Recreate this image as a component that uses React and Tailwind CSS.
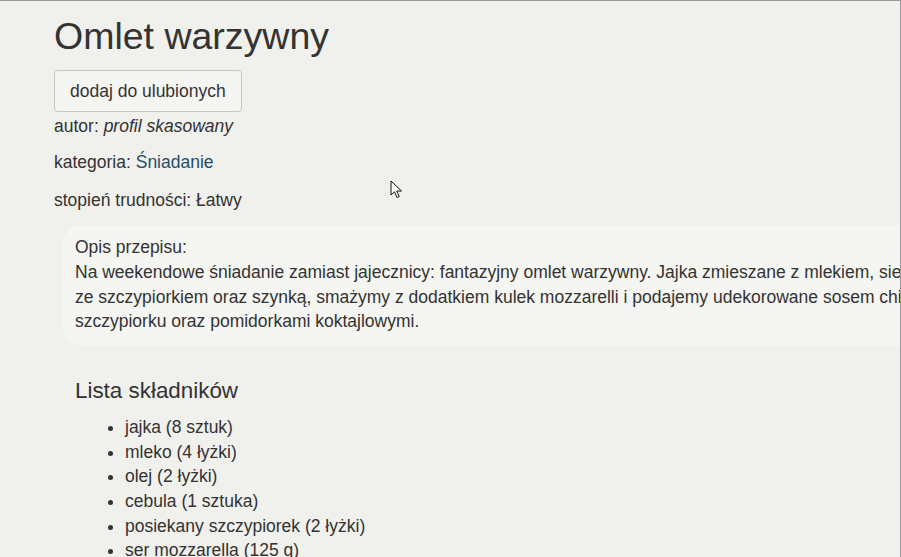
import React from 'react'

const ingredients = [
    'jajka (8 sztuk)',
    'mleko (4 łyżki)',
    'olej (2 łyżki)',
    'cebula (1 sztuka)',
    'posiekany szczypiorek (2 łyżki)',
    'ser mozzarella (125 g)',
]

const descLines = [
    'Na weekendowe śniadanie zamiast jajecznicy: fantazyjny omlet warzywny. Jajka zmieszane z mlekiem, siekaną cebulą',
    'ze szczypiorkiem oraz szynką, smażymy z dodatkiem kulek mozzarelli i podajemy udekorowane sosem chili, gałązkami',
    'szczypiorku oraz pomidorkami koktajlowymi.',
]

function Cursor() {
    return (
        <svg className="absolute left-[390px] top-[179px]" width="14" height="21" viewBox="0 0 14 21">
            <path d="M1 1 L1 15 L4.5 11.8 L7 17.5 L9.2 16.6 L6.8 11 L11.5 11 Z" fill="#fff" stroke="#111" strokeWidth="1" strokeLinejoin="round" />
        </svg>
    )
}

export default function App() {
    return (
        <div
            className="relative w-[901px] h-[557px] overflow-hidden bg-[#f0f0ec] border-t border-t-[#9a9a9a] border-r border-r-[#9a9a9a] text-[#333] text-[17.5px]"
            style={{ fontFamily: '"Liberation Sans", Arial, sans-serif' }}
        >
            <div className="pl-[54px]">
                <h1 className="mt-[15px] text-[37.5px] leading-[41px] font-normal">Omlet warzywny</h1>

                <button className="mt-[13px] h-[42px] px-[15px] border border-[#c6c6c3] rounded-[4px] bg-[#f5f5f2] leading-[24px]">
                    dodaj do ulubionych
                </button>

                <p className="mt-[2px] leading-[24px]">
                    autor: <em className="italic">profil skasowany</em>
                </p>
                <p className="mt-[12px] leading-[24px]">
                    kategoria: <a className="text-[#1f4f69]">Śniadanie</a>
                </p>
                <p className="mt-[14px] leading-[24px]">stopień trudności: Łatwy</p>

                <div className="mt-[13px] ml-[9px] w-[1000px] rounded-[20px] bg-[#f5f5f1] pl-[12px] pt-[10px] pb-[12px] leading-[24.8px]">
                    <div>Opis przepisu:</div>
                    {descLines.map((line) => (
                        <div key={line} className="whitespace-nowrap">{line}</div>
                    ))}
                </div>

                <h3 className="mt-[31px] ml-[21px] text-[22.4px] leading-[28px]">Lista składników</h3>

                <ul className="mt-[10px] ml-[71px] list-disc leading-[24.6px]">
                    {ingredients.map((item) => (
                        <li key={item}>{item}</li>
                    ))}
                </ul>
            </div>

            <Cursor />
        </div>
    )
}
